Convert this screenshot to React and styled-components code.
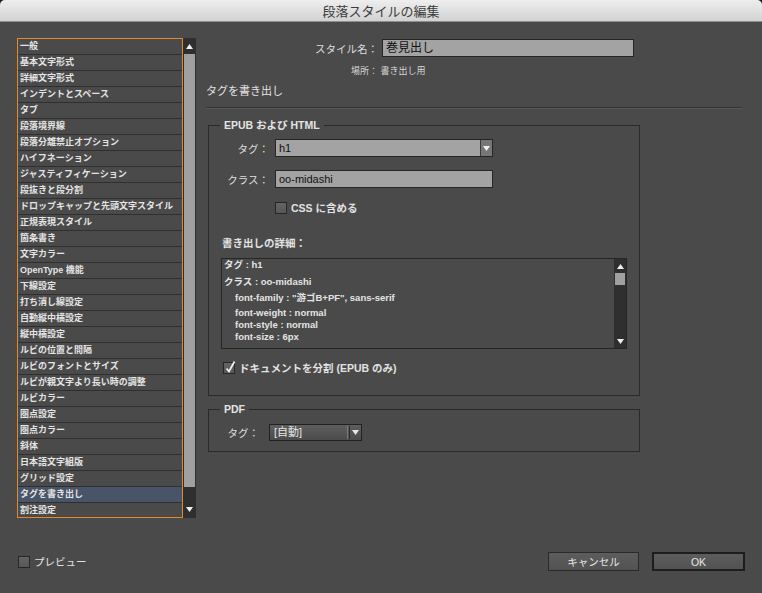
import React from 'react';
import styled, { createGlobalStyle } from 'styled-components';

const FONT = `"Liberation Sans", "Noto Sans CJK JP", sans-serif`;

const Global = createGlobalStyle`
  html, body { margin: 0; padding: 0; background: #1c1c1c; }
  body { font-family: ${FONT}; }
  * { box-sizing: border-box; }
`;

const Window = styled.div`
  width: 762px;
  height: 593px;
  display: flex;
  flex-direction: column;
  background: #4a4a4a;
  overflow: hidden;
  border-radius: 5px 5px 0 0;
`;

const TitleBar = styled.div`
  height: 22px;
  flex: none;
  background: linear-gradient(#eeeeee, #d2d2d2);
  border-bottom: 1px solid #8e8e8e;
  display: flex;
  align-items: center;
  justify-content: center;
  font-size: 13px;
  color: #3c3c3c;
`;

const Main = styled.div`
  display: flex;
  padding: 16px 0 0 17px;
`;

const LeftPane = styled.div`
  display: flex;
  height: 480px;
  flex: none;
`;

const ListBox = styled.div`
  width: 166px;
  height: 480px;
  border: 1px solid #e3892d;
  overflow: hidden;
  background: #4a4a4a;
`;

const ListRow = styled.div`
  height: 16px;
  border-bottom: 1px solid #2f2f2f;
  padding-left: 2px;
  font-size: 9px;
  font-weight: bold;
  line-height: 15px;
  color: #e4e4e4;
  white-space: nowrap;
  background: ${(p) => (p.$selected ? '#485467' : 'transparent')};
`;

const ScrollBar = styled.div`
  width: ${(p) => p.$w}px;
  flex: none;
  background: #2f2f2f;
  display: flex;
  flex-direction: column;
  align-items: center;
`;

const ScrollArrow = styled.div`
  height: ${(p) => p.$h}px;
  flex: none;
  width: 100%;
  display: flex;
  align-items: center;
  justify-content: center;
`;

const ScrollThumb = styled.div`
  height: ${(p) => p.$h}px;
  flex: none;
  width: ${(p) => p.$w}px;
  background: #a0a0a0;
`;

const ScrollTrack = styled.div`
  flex: 1;
  width: 100%;
`;

const RightPane = styled.div`
  margin-left: 10px;
  width: 536px;
  display: flex;
  flex-direction: column;
`;

const StyleNameRow = styled.div`
  display: flex;
  align-items: center;
  gap: 4px;
  margin-top: 1px;
  height: 18px;
`;

const FieldLabel = styled.div`
  width: ${(p) => p.$w}px;
  flex: none;
  text-align: right;
  font-size: 10.5px;
  color: #dedede;
  white-space: nowrap;
`;

const TextField = styled.div`
  width: ${(p) => p.$w}px;
  height: ${(p) => p.$h || 18}px;
  background: #a3a3a3;
  border: 1px solid #262626;
  font-size: ${(p) => p.$fs || 11}px;
  color: #111;
  padding-left: 3px;
  line-height: ${(p) => (p.$h || 18) - 2}px;
  white-space: nowrap;
`;

const Location = styled.div`
  margin-top: 8px;
  padding-left: 145px;
  font-size: 9px;
  line-height: 12px;
  color: #d8d8d8;
`;

const SectionTitle = styled.div`
  margin-top: 7px;
  font-size: 11px;
  line-height: 14px;
  color: #e2e2e2;
`;

const Separator = styled.div`
  margin-top: 9px;
  height: 2px;
  border-top: 1px solid #343434;
  border-bottom: 1px solid #585858;
`;

const Group = styled.fieldset`
  margin: ${(p) => p.$mt}px 0 0 2px;
  width: 432px;
  padding: 0 0 ${(p) => p.$pb}px 0;
  border: 1px solid #2a2a2a;
  min-width: 0;
`;

const Legend = styled.legend`
  margin-left: 11px;
  padding: 0 4px;
  font-size: 10.5px;
  font-weight: bold;
  line-height: 14px;
  color: #e4e4e4;
`;

const FormRow = styled.div`
  display: flex;
  align-items: center;
  gap: ${(p) => p.$gap}px;
  margin-top: ${(p) => p.$mt}px;
`;

const Select = styled.div`
  width: ${(p) => p.$w}px;
  height: 18px;
  display: flex;
  background: #a3a3a3;
  border: 1px solid #262626;
`;

const SelectValue = styled.div`
  flex: 1;
  padding-left: 3px;
  font-size: 11px;
  line-height: 16px;
  color: #111;
`;

const SelectArrow = styled.div`
  width: 12px;
  flex: none;
  border-left: 1px solid #3a3a3a;
  background: #777;
  display: flex;
  align-items: center;
  justify-content: center;
`;

const DarkSelect = styled.div`
  width: ${(p) => p.$w}px;
  height: 17px;
  display: flex;
  background: linear-gradient(#5e5e5e, #4b4b4b);
  border: 1px solid #212121;
`;

const DarkValue = styled.div`
  flex: 1;
  padding-left: 4px;
  font-size: 11px;
  line-height: 15px;
  color: #e6e6e6;
`;

const DarkDivider = styled.div`
  width: 3px;
  flex: none;
  margin: 1px 0;
  border-left: 1px solid #7a7a7a;
  border-right: 1px solid #2c2c2c;
`;

const DarkArrow = styled.div`
  width: 11px;
  flex: none;
  display: flex;
  align-items: center;
  justify-content: center;
`;

const CheckRow = styled.div`
  display: flex;
  align-items: center;
  gap: 4px;
  margin-top: ${(p) => p.$mt || 0}px;
  margin-left: ${(p) => p.$ml || 0}px;
`;

const CheckBox = styled.div`
  width: 12px;
  height: 12px;
  flex: none;
  position: relative;
  background: linear-gradient(#646464, #575757);
  border: 1px solid #262626;
`;

const CheckMark = styled.svg`
  position: absolute;
  left: 0px;
  top: -3px;
`;

const CheckLabel = styled.div`
  font-size: 10.5px;
  font-weight: ${(p) => (p.$bold ? 'bold' : 'normal')};
  line-height: 12px;
  color: #e2e2e2;
  white-space: nowrap;
`;

const DetailsLabel = styled.div`
  margin-top: 22px;
  padding-left: 13px;
  font-size: 10.5px;
  font-weight: bold;
  line-height: 14px;
  color: #e2e2e2;
`;

const DetailsBox = styled.div`
  margin: 8px 0 0 12px;
  width: 406px;
  height: 91px;
  border: 1px solid #262626;
  display: flex;
`;

const DetailsText = styled.div`
  flex: 1;
  padding-left: 2px;
  overflow: hidden;
`;

const DetailLine = styled.div`
  font-size: 9.5px;
  font-weight: bold;
  line-height: 12px;
  color: #e4e4e4;
  padding-left: ${(p) => p.$indent || 0}px;
  margin-top: ${(p) => p.$mt || 0}px;
  white-space: pre;
`;

const Footer = styled.div`
  margin-top: auto;
  display: flex;
  align-items: center;
  padding: 0 17px 22px 18px;
`;

const Spacer = styled.div`
  flex: 1;
`;

const Button = styled.div`
  width: ${(p) => p.$w}px;
  height: 19px;
  margin-left: ${(p) => p.$ml || 0}px;
  display: flex;
  align-items: center;
  justify-content: center;
  background: linear-gradient(#5d5d5d, #525252);
  border: ${(p) => (p.$default ? '2px solid #1d1d1d' : '1px solid #2a2a2a')};
  font-size: 10.5px;
  color: #e6e6e6;
`;

const Tri = ({ up, color = '#f0f0f0', w = 7, h = 5 }) => (
  <svg width={w} height={h} viewBox="0 0 7 5">
    <polygon points={up ? '0,5 7,5 3.5,0' : '0,0 7,0 3.5,5'} fill={color} />
  </svg>
);

const Check = () => (
  <CheckMark width="13" height="14" viewBox="0 0 13 14">
    <path d="M2.5 8.5 L5 11.5 L10.5 1.5" stroke="#f2f2f2" strokeWidth="1.7" fill="none" />
  </CheckMark>
);

const items = [
  '一般', '基本文字形式', '詳細文字形式', 'インデントとスペース', 'タブ', '段落境界線',
  '段落分離禁止オプション', 'ハイフネーション', 'ジャスティフィケーション', '段抜きと段分割',
  'ドロップキャップと先頭文字スタイル', '正規表現スタイル', '箇条書き', '文字カラー',
  'OpenType 機能', '下線設定', '打ち消し線設定', '自動縦中横設定', '縦中横設定',
  'ルビの位置と間隔', 'ルビのフォントとサイズ', 'ルビが親文字より長い時の調整', 'ルビカラー',
  '圏点設定', '圏点カラー', '斜体', '日本語文字組版', 'グリッド設定', 'タグを書き出し', '割注設定',
];

export default function App() {
  return (
    <>
      <Global />
      <Window>
        <TitleBar>段落スタイルの編集</TitleBar>
        <Main>
          <LeftPane>
            <ListBox>
              {items.map((t) => (
                <ListRow key={t} $selected={t === 'タグを書き出し'}>{t}</ListRow>
              ))}
            </ListBox>
            <ScrollBar $w={13}>
              <ScrollArrow $h={16}><Tri up /></ScrollArrow>
              <ScrollThumb $h={433} $w={11} />
              <ScrollTrack />
              <ScrollArrow $h={17}><Tri /></ScrollArrow>
            </ScrollBar>
          </LeftPane>

          <RightPane>
            <StyleNameRow>
              <FieldLabel $w={172}>スタイル名：</FieldLabel>
              <TextField $w={252} $fs={12}>巻見出し</TextField>
            </StyleNameRow>
            <Location>場所： 書き出し用</Location>
            <SectionTitle>タグを書き出し</SectionTitle>
            <Separator />

            <Group $mt={9} $pb={21}>
              <Legend>EPUB および HTML</Legend>
              <FormRow $gap={6} $mt={7}>
                <FieldLabel $w={60}>タグ：</FieldLabel>
                <Select $w={218}>
                  <SelectValue>h1</SelectValue>
                  <SelectArrow><Tri /></SelectArrow>
                </Select>
              </FormRow>
              <FormRow $gap={6} $mt={13}>
                <FieldLabel $w={60}>クラス：</FieldLabel>
                <TextField $w={218}>oo-midashi</TextField>
              </FormRow>
              <CheckRow $mt={14} $ml={66}>
                <CheckBox />
                <CheckLabel $bold>CSS に含める</CheckLabel>
              </CheckRow>
              <DetailsLabel>書き出しの詳細：</DetailsLabel>
              <DetailsBox>
                <DetailsText>
                  <DetailLine>タグ : h1</DetailLine>
                  <DetailLine $mt={5}>クラス : oo-midashi</DetailLine>
                  <DetailLine $mt={4} $indent={11}>font-family : "游ゴB+PF", sans-serif</DetailLine>
                  <DetailLine $mt={3} $indent={11}>font-weight : normal</DetailLine>
                  <DetailLine $indent={11}>font-style : normal</DetailLine>
                  <DetailLine $indent={11}>font-size : 6px</DetailLine>
                </DetailsText>
                <ScrollBar $w={12}>
                  <ScrollArrow $h={14}><Tri up /></ScrollArrow>
                  <ScrollThumb $h={12} $w={10} />
                  <ScrollTrack />
                  <ScrollArrow $h={14}><Tri /></ScrollArrow>
                </ScrollBar>
              </DetailsBox>
              <CheckRow $mt={13} $ml={14}>
                <CheckBox><Check /></CheckBox>
                <CheckLabel $bold>ドキュメントを分割 (EPUB のみ)</CheckLabel>
              </CheckRow>
            </Group>

            <Group $mt={6} $pb={10}>
              <Legend>PDF</Legend>
              <FormRow $gap={10} $mt={8}>
                <FieldLabel $w={50}>タグ：</FieldLabel>
                <DarkSelect $w={93}>
                  <DarkValue>[自動]</DarkValue>
                  <DarkDivider />
                  <DarkArrow><Tri color="#e8e8e8" /></DarkArrow>
                </DarkSelect>
              </FormRow>
            </Group>
          </RightPane>
        </Main>

        <Footer>
          <CheckRow>
            <CheckBox />
            <CheckLabel>プレビュー</CheckLabel>
          </CheckRow>
          <Spacer />
          <Button $w={91}>キャンセル</Button>
          <Button $w={93} $ml={13} $default>OK</Button>
        </Footer>
      </Window>
    </>
  );
}
